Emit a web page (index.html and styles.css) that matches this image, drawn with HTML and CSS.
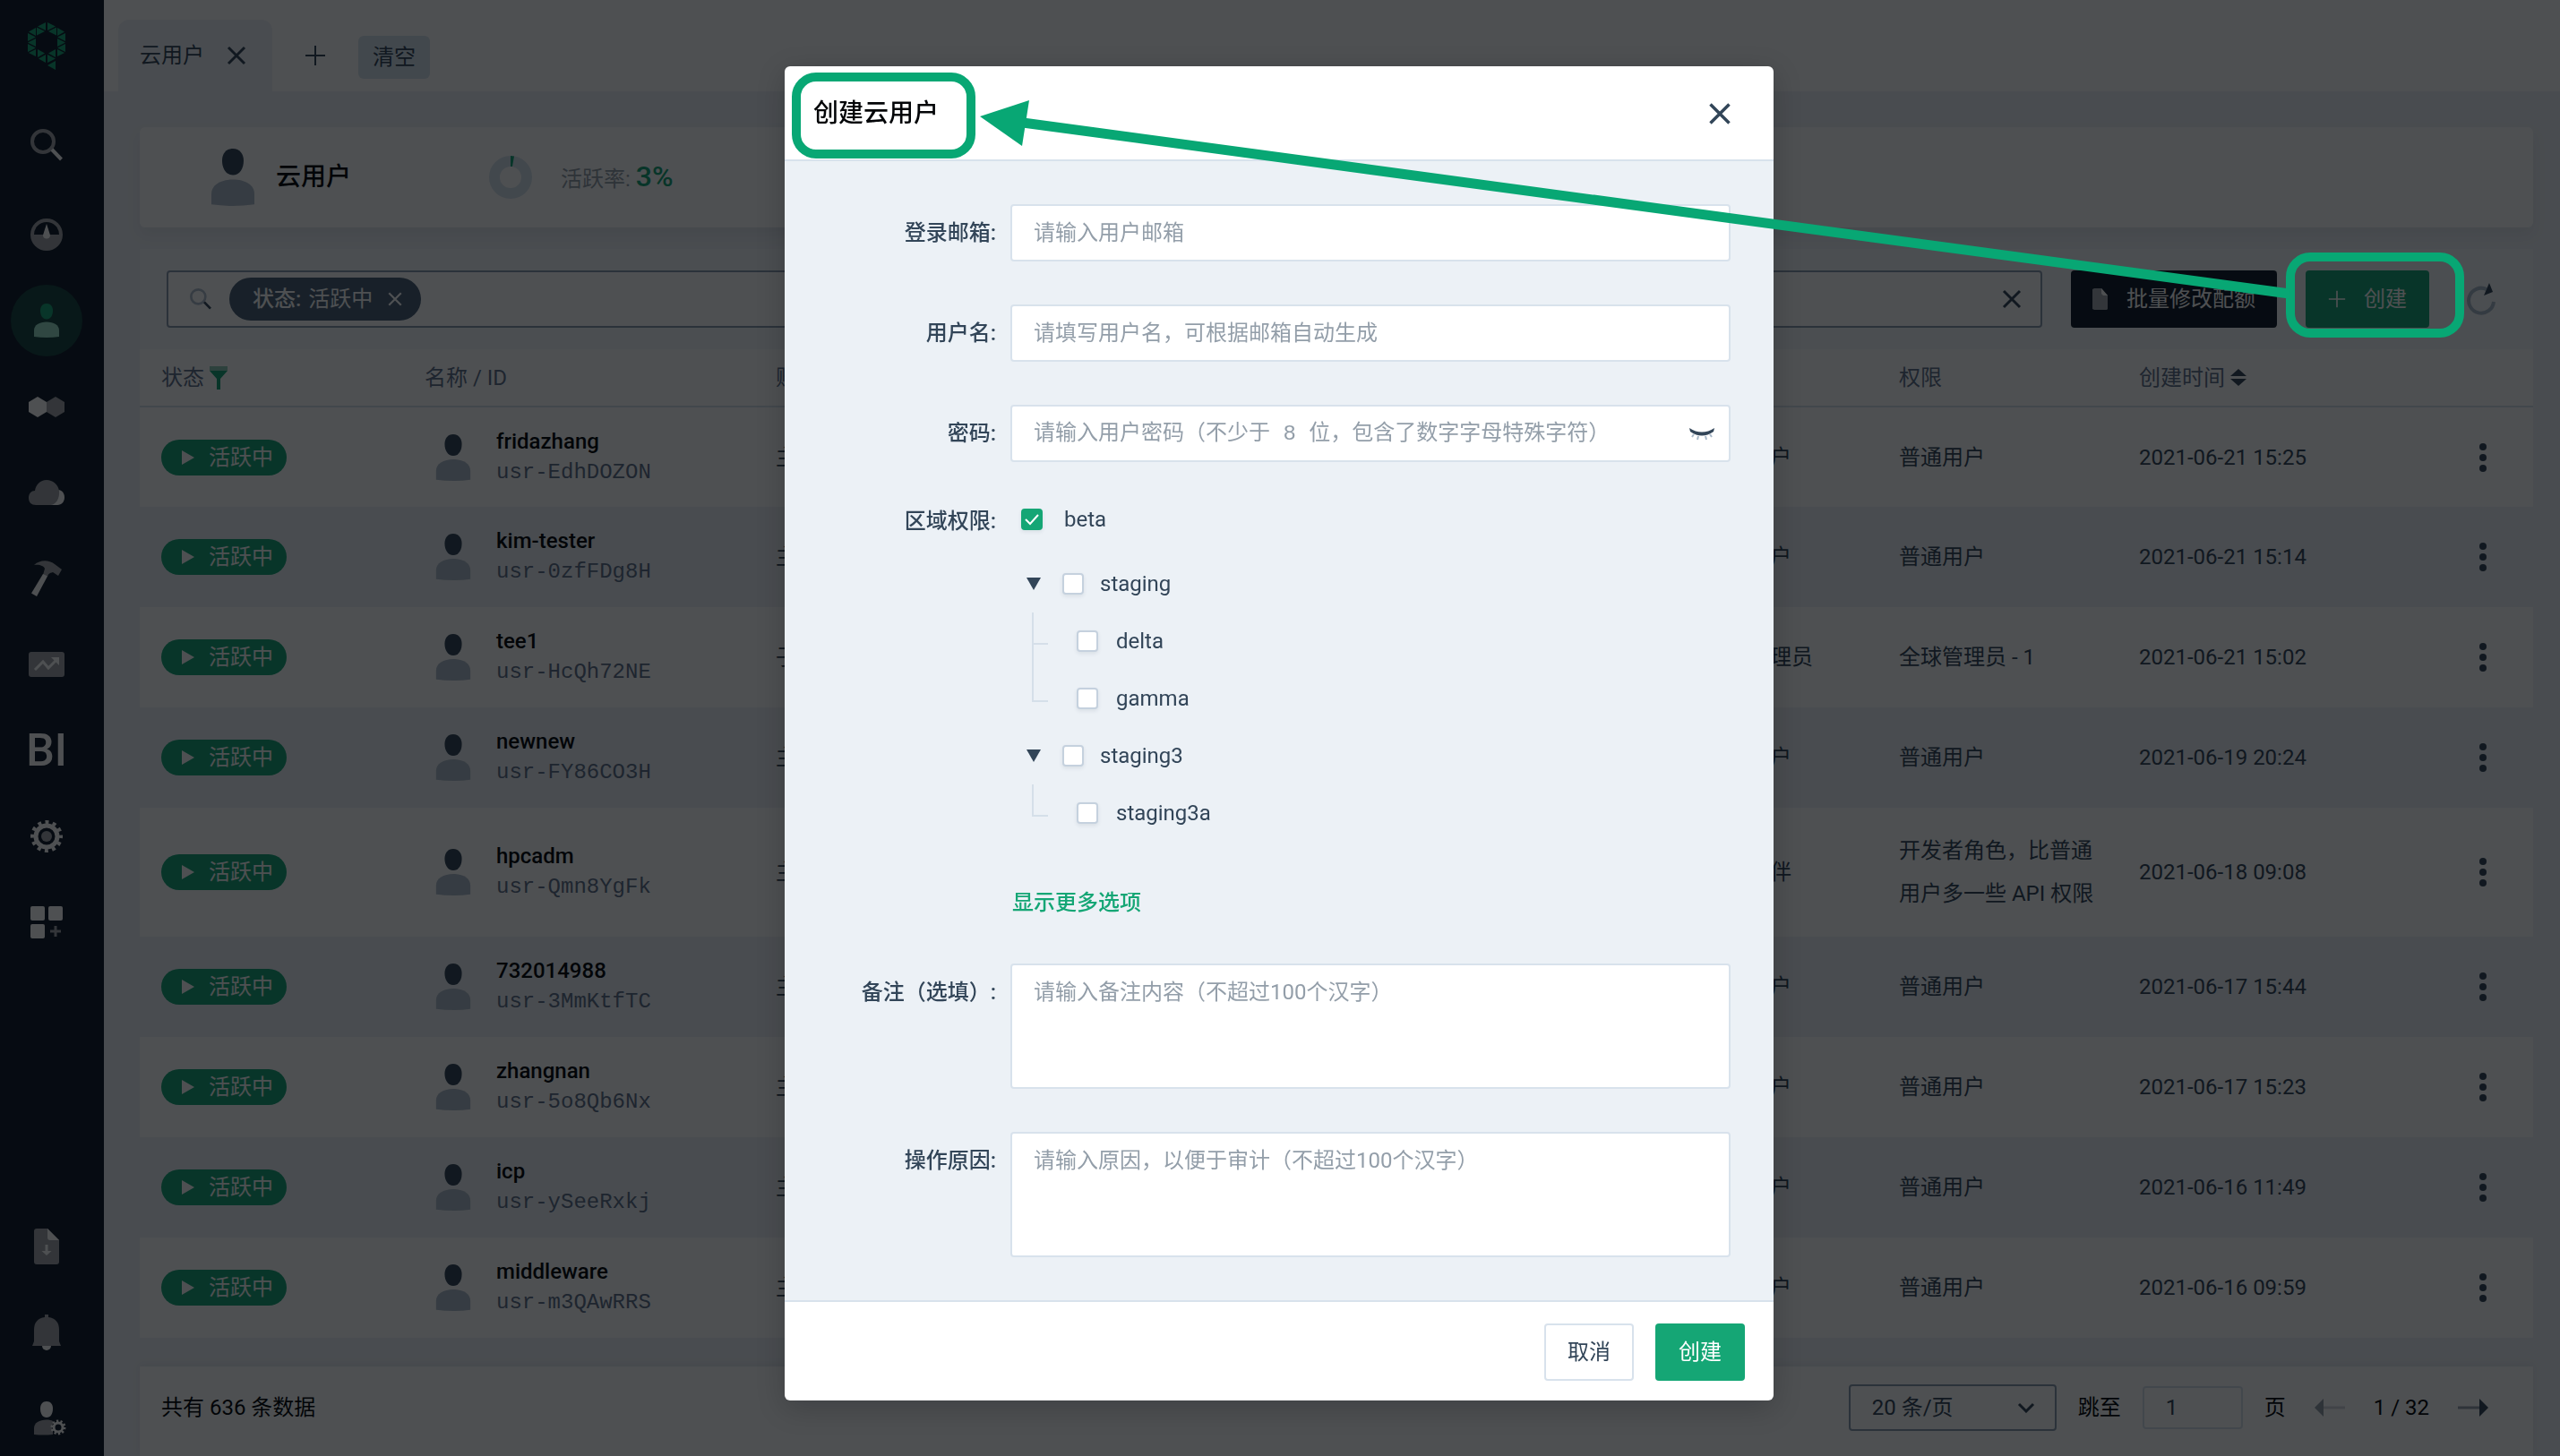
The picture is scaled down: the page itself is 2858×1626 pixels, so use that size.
FILE: index.html
```html
<!DOCTYPE html>
<html lang="zh-CN">
<head>
<meta charset="utf-8">
<title>云用户</title>
<link rel="stylesheet" href="styles.css">
</head>
<body>
<svg class="sprite" aria-hidden="true">
  <symbol id="i-user" viewBox="0 0 28 38"><path class="head" d="M14 0c4.500 0 7 3.500 7 8 0 5-2.500 9.500-7 9.500S7 13 7 8c0-4.500 2.500-8 7-8z"/><path class="torso" d="M0 37V30c0-6 6-9.500 14-9.500S28 24 28 30v7q-14 2-28 0z"/></symbol>
  <symbol id="i-x" viewBox="0 0 24 24"><path d="M3 3l18 18M21 3L3 21" fill="none" stroke="currentColor" stroke-width="3"/></symbol>
  <symbol id="i-plus" viewBox="0 0 24 24"><path d="M12 1v22M1 12h22" fill="none" stroke="currentColor" stroke-width="2"/></symbol>
  <symbol id="i-dots" viewBox="0 0 8 32"><circle cx="4" cy="4" r="4"/><circle cx="4" cy="16" r="4"/><circle cx="4" cy="28" r="4"/></symbol>
  <symbol id="i-play" viewBox="0 0 14 16"><path d="M0 0l14 8-14 8z"/></symbol>
  <symbol id="i-search" viewBox="0 0 36 36"><circle class="ring" cx="14" cy="14" r="12"/><path class="grip" d="M24 23l10.500 11"/></symbol>
</svg>

<div class="app">
  <nav class="sidebar" aria-label="主导航">
    <a class="logo" href="#" aria-label="首页"><svg width="42" height="54" viewBox="0 0 42 54"><path d="M20 1v9l-9-4.500zM22 1v9l9-4.500zM10 6.500v9l9-4.500zM32 6.500v9L23 11zM9 7v9l-8-4.500zM33 7v9l8-4.500zM0 13v9l9-4.500zM42 13v9l-9-4.500zM9 19v9l-9-4.500zM33 19v9l9-4.500zM0 25v9l9-4.500zM42 25v9l-9-4.500zM9 31v8l-8-4zM33 31v8l8-4zM11 31v9l8-4.500zM31 31v9l-8-4.500zM20 37v9l-8-4.500zM22 37v9l9-4.500zM31 44v10l-9-5z"/></svg></a>
    <a class="nav-item nav-search" href="#" aria-label="搜索"><svg width="36" height="36"><use href="#i-search"/></svg></a>
    <a class="nav-item" href="#" aria-label="概览"><svg width="36" height="36" viewBox="0 0 36 36"><path class="dim" fill-rule="evenodd" d="M18 0a18 18 0 1 1 0 36 18 18 0 0 1 0-36zM4 18h28a14 14 0 0 0-28 0z"/><path class="lit" d="M18 6l4 12.500a4 4 0 1 1-8 0z"/></svg></a>
    <a class="nav-item active" href="#" aria-label="云用户"><svg width="28" height="38"><use href="#i-user"/></svg></a>
    <a class="nav-item" href="#" aria-label="资源"><svg width="40" height="23" viewBox="0 0 40 23"><path class="lit" d="M10 0l10 6v11l-10 6-10-6V6z"/><path class="dim" d="M30 0l10 6v11l-10 6-10-6V6z"/></svg></a>
    <a class="nav-item" href="#" aria-label="云平台"><svg width="40" height="28" viewBox="0 0 40 28"><path class="lit" d="M33 11c4 0 7 4 7 8.500S37 28 32 28h-8z"/><path class="dim" d="M7 12C8 5 13 0 20 0s13 5 14 12c1 9-4 16-10 16H8c-5 0-8-3-8-8s3-8 7-8z"/></svg></a>
    <a class="nav-item" href="#" aria-label="工具"><svg width="36" height="40" viewBox="0 0 36 40"><path class="dim" d="M4 5C11-1 20-1 27 4l8 6-4 7-6-4c-4 1-5 2-6 5l-5-2 2-7C15 6 10 4 4 5z"/><path class="lit" d="M14 15l5 2.500L7 40l-6-3.500z"/></svg></a>
    <a class="nav-item" href="#" aria-label="监控"><svg width="40" height="28" viewBox="0 0 40 28"><rect class="dim" width="40" height="28" rx="3"/><path class="lit-line" d="M7 20l9-9 6 7 9-9" fill="none" stroke-width="3"/><path class="lit" d="M25 6h9v9z"/></svg></a>
    <a class="nav-item bi" href="#">BI</a>
    <a class="nav-item" href="#" aria-label="设置"><svg width="36" height="36" viewBox="0 0 36 36"><circle class="lit-line" cx="18" cy="18" r="16" fill="none" stroke-width="4" stroke-dasharray="4 4.377" stroke-dashoffset="2"/><circle class="lit-line" cx="18" cy="18" r="12" fill="none" stroke-width="5"/><circle class="dim" cx="18" cy="18" r="6"/></svg></a>
    <a class="nav-item" href="#" aria-label="应用"><svg width="36" height="36" viewBox="0 0 36 36"><rect class="lit" width="16" height="16" rx="2"/><rect class="lit" x="20" width="16" height="16" rx="2"/><rect class="lit" y="20" width="16" height="16" rx="2"/><path class="dim" d="M26.500 22h3v4.500H34v3h-4.500V34h-3v-4.500H22v-3h4.500z"/></svg></a>
    <div class="nav-bottom">
      <a class="nav-item" href="#" aria-label="下载"><svg width="28" height="40" viewBox="0 0 28 40"><path class="dim" d="M3 0h12l13 13v24q0 3-3 3H3q-3 0-3-3V3q0-3 3-3z"/><path class="lit" d="M15 0l13 13H18q-3 0-3-3z"/><path class="lit" d="M12.500 18h3v7h4l-5.500 5-5.500-5h4z"/></svg></a>
      <a class="nav-item" href="#" aria-label="通知"><svg width="32" height="40" viewBox="0 0 32 40"><path class="dim" d="M14 0h4v3c8 1 12 6 12 14v13l2 5H0l2-5V17C2 9 6 4 14 3z"/><path class="lit" d="M11 35h10a5 5 0 0 1-10 0z"/></svg></a>
      <a class="nav-item" href="#" aria-label="账户"><svg class="shifted" width="36" height="38" viewBox="0 0 36 38"><path class="lit" d="M14 0c4.500 0 7 3.500 7 8 0 6-2.500 10-7 10S7 14 7 8c0-4.500 2.500-8 7-8z"/><path class="dim" d="M0 37V30c0-6 6-9.500 14-9.500 3 0 5 .5 7 1.500v15q-10 1-21 0z"/><circle class="gear-gap" cx="27" cy="29" r="7"/><circle class="lit-line" cx="27" cy="29" r="7" fill="none" stroke-width="3" stroke-dasharray="2.200 2.200"/><circle class="lit-line" cx="27" cy="29" r="5" fill="none" stroke-width="3"/></svg></a>
    </div>
  </nav>

  <main class="main">
    <header class="tabs">
      <div class="tab"><span>云用户</span><button class="icon-btn" aria-label="关闭标签"><svg width="24" height="24"><use href="#i-x"/></svg></button></div>
      <button class="icon-btn add-tab" aria-label="新建标签"><svg width="24" height="24"><use href="#i-plus"/></svg></button>
      <button class="clear-tabs">清空</button>
    </header>

    <div class="content">
      <section class="summary">
        <svg class="avatar-lg" width="48" height="64" viewBox="0 0 28 38" preserveAspectRatio="none"><use href="#i-user" width="28" height="38"/></svg>
        <h1>云用户</h1>
        <svg class="donut" width="48" height="48" viewBox="0 0 48 48"><circle cx="24" cy="24" r="18" fill="none" stroke="#d8e4ee" stroke-width="12"/><path d="M24 0l4 .4-2 11.700-2-.1z" fill="#15a675"/></svg>
        <p class="rate">活跃率: <strong>3%</strong></p>
      </section>

      <section class="panel">
        <div class="toolbar">
          <div class="search">
            <svg class="search-icon" width="24" height="24" viewBox="0 0 36 36"><use href="#i-search" width="36" height="36"/></svg>
            <span class="tag"><b>状态:</b> 活跃中<button class="icon-btn" aria-label="移除条件"><svg width="18" height="18"><use href="#i-x"/></svg></button></span>
            <input type="text" aria-label="搜索云用户">
            <button class="icon-btn" aria-label="清除搜索"><svg width="24" height="24"><use href="#i-x"/></svg></button>
          </div>
          <button class="btn dark"><svg width="18" height="24" viewBox="0 0 18 24"><path fill="#a3a8ae" d="M2 0h8l7 8v15l-1 1H2l-2-1V1z"/><path fill="#fff" d="M10 0l7 8h-5l-2-2z"/></svg>批量修改配额</button>
          <button class="btn green"><svg width="20" height="20"><use href="#i-plus"/></svg>创建</button>
          <button class="icon-btn refresh" aria-label="刷新"><svg width="34" height="36" viewBox="0 0 34 36"><path fill="none" stroke="#a9b9c9" stroke-width="4" d="M22 7A14 14 0 1 0 30 21"/><path fill="#324558" d="M25 0l4 10-10 4z"/></svg></button>
        </div>

        <div class="table-wrap">
        <table>
          <colgroup><col class="c-status"><col class="c-name"><col><col class="c-role"><col class="c-perm"><col class="c-time"><col class="c-menu"></colgroup>
          <thead>
            <tr><th><span class="th-in">状态<svg width="20" height="26" viewBox="0 0 20 26"><path fill="#8fcdb7" d="M0 0h20v5H0z"/><path fill="#15a675" d="M0 5h20l-8 9v12H8V14z"/></svg></span></th><th>名称 / ID</th><th>账户类型</th><th>角色</th><th>权限</th><th><span class="th-in">创建时间<svg width="18" height="20" viewBox="0 0 18 20"><path fill="#324558" d="M0 8l9-8 9 8zM0 11h18l-9 8z"/></svg></span></th><th></th></tr>
          </thead>
          <tbody>
            <tr><td><span class="pill"><svg width="14" height="16"><use href="#i-play"/></svg>活跃中</span></td><td><div class="who"><svg width="40" height="52"><use href="#i-user"/></svg><div><div class="name">fridazhang</div><div class="uid">usr-EdhDOZON</div></div></div></td><td>主账户</td><td>普通用户</td><td>普通用户</td><td>2021-06-21 15:25</td><td><button class="icon-btn" aria-label="更多"><svg width="8" height="32"><use href="#i-dots"/></svg></button></td></tr>
            <tr><td><span class="pill"><svg width="14" height="16"><use href="#i-play"/></svg>活跃中</span></td><td><div class="who"><svg width="40" height="52"><use href="#i-user"/></svg><div><div class="name">kim-tester</div><div class="uid">usr-0zfFDg8H</div></div></div></td><td>主账户</td><td>普通用户</td><td>普通用户</td><td>2021-06-21 15:14</td><td><button class="icon-btn" aria-label="更多"><svg width="8" height="32"><use href="#i-dots"/></svg></button></td></tr>
            <tr><td><span class="pill"><svg width="14" height="16"><use href="#i-play"/></svg>活跃中</span></td><td><div class="who"><svg width="40" height="52"><use href="#i-user"/></svg><div><div class="name">tee1</div><div class="uid">usr-HcQh72NE</div></div></div></td><td>子账户</td><td>全球管理员</td><td>全球管理员 - 1</td><td>2021-06-21 15:02</td><td><button class="icon-btn" aria-label="更多"><svg width="8" height="32"><use href="#i-dots"/></svg></button></td></tr>
            <tr><td><span class="pill"><svg width="14" height="16"><use href="#i-play"/></svg>活跃中</span></td><td><div class="who"><svg width="40" height="52"><use href="#i-user"/></svg><div><div class="name">newnew</div><div class="uid">usr-FY86CO3H</div></div></div></td><td>主账户</td><td>普通用户</td><td>普通用户</td><td>2021-06-19 20:24</td><td><button class="icon-btn" aria-label="更多"><svg width="8" height="32"><use href="#i-dots"/></svg></button></td></tr>
            <tr><td><span class="pill"><svg width="14" height="16"><use href="#i-play"/></svg>活跃中</span></td><td><div class="who"><svg width="40" height="52"><use href="#i-user"/></svg><div><div class="name">hpcadm</div><div class="uid">usr-Qmn8YgFk</div></div></div></td><td>主账户</td><td>合作伙伴</td><td>开发者角色，比普通用户多一些 API 权限</td><td>2021-06-18 09:08</td><td><button class="icon-btn" aria-label="更多"><svg width="8" height="32"><use href="#i-dots"/></svg></button></td></tr>
            <tr><td><span class="pill"><svg width="14" height="16"><use href="#i-play"/></svg>活跃中</span></td><td><div class="who"><svg width="40" height="52"><use href="#i-user"/></svg><div><div class="name">732014988</div><div class="uid">usr-3MmKtfTC</div></div></div></td><td>主账户</td><td>普通用户</td><td>普通用户</td><td>2021-06-17 15:44</td><td><button class="icon-btn" aria-label="更多"><svg width="8" height="32"><use href="#i-dots"/></svg></button></td></tr>
            <tr><td><span class="pill"><svg width="14" height="16"><use href="#i-play"/></svg>活跃中</span></td><td><div class="who"><svg width="40" height="52"><use href="#i-user"/></svg><div><div class="name">zhangnan</div><div class="uid">usr-5o8Qb6Nx</div></div></div></td><td>主账户</td><td>普通用户</td><td>普通用户</td><td>2021-06-17 15:23</td><td><button class="icon-btn" aria-label="更多"><svg width="8" height="32"><use href="#i-dots"/></svg></button></td></tr>
            <tr><td><span class="pill"><svg width="14" height="16"><use href="#i-play"/></svg>活跃中</span></td><td><div class="who"><svg width="40" height="52"><use href="#i-user"/></svg><div><div class="name">icp</div><div class="uid">usr-ySeeRxkj</div></div></div></td><td>主账户</td><td>普通用户</td><td>普通用户</td><td>2021-06-16 11:49</td><td><button class="icon-btn" aria-label="更多"><svg width="8" height="32"><use href="#i-dots"/></svg></button></td></tr>
            <tr><td><span class="pill"><svg width="14" height="16"><use href="#i-play"/></svg>活跃中</span></td><td><div class="who"><svg width="40" height="52"><use href="#i-user"/></svg><div><div class="name">middleware</div><div class="uid">usr-m3QAwRRS</div></div></div></td><td>主账户</td><td>普通用户</td><td>普通用户</td><td>2021-06-16 09:59</td><td><button class="icon-btn" aria-label="更多"><svg width="8" height="32"><use href="#i-dots"/></svg></button></td></tr>
          </tbody>
        </table>
        </div>

        <footer class="pager">
          <span>共有 636 条数据</span>
          <div class="pager-nav">
            <select aria-label="每页条数"><option>20 条/页</option></select>
            <label for="page">跳至</label>
            <input id="page" type="text" value="1">
            <span>页</span>
            <button class="icon-btn prev" aria-label="上一页"><svg width="34" height="20" viewBox="0 0 34 20"><path d="M8 8.500h26v3H8z" opacity=".4"/><path d="M0 10L10 0v20z"/></svg></button>
            <span class="count">1 / 32</span>
            <button class="icon-btn next" aria-label="下一页"><svg width="34" height="20" viewBox="0 0 34 20"><path d="M0 8.500h26v3H0z" opacity=".5"/><path d="M34 10L24 0v20z"/></svg></button>
          </div>
        </footer>
      </section>
    </div>
  </main>
</div>

<div class="overlay">
  <form class="modal" role="dialog" aria-labelledby="modal-title">
    <header class="modal-head">
      <h2 id="modal-title">创建云用户</h2>
      <button type="button" class="icon-btn" aria-label="关闭"><svg width="28" height="28"><use href="#i-x"/></svg></button>
    </header>
    <div class="modal-body">
      <div class="field"><label for="email">登录邮箱:</label><input id="email" type="text" placeholder="请输入用户邮箱"></div>
      <div class="field"><label for="uname">用户名:</label><input id="uname" type="text" placeholder="请填写用户名，可根据邮箱自动生成"></div>
      <div class="field"><label for="pwd">密码:</label>
        <div class="pwd"><input id="pwd" type="password" placeholder="请输入用户密码（不少于 8 位，包含了数字字母特殊字符）"><button type="button" class="icon-btn" aria-label="显示密码"><svg width="28" height="14" viewBox="0 0 28 14"><path fill="#324558" d="M0 0q14 9 28 0l-1 4q-13 9-26 0z"/><path fill="none" stroke="#a9b9c9" stroke-width="2" d="M5 7l-2 3M10 9l-1 4M18 9l1 4M23 7l2 3"/></svg></button></div>
      </div>
      <div class="field region"><span class="label">区域权限:</span>
        <div>
          <label class="check"><input type="checkbox" checked>beta</label>
          <ul class="tree">
            <li><div class="node"><svg width="16" height="14" viewBox="0 0 16 14"><path d="M0 0h16l-8 14z"/></svg><label class="check"><input type="checkbox">staging</label></div>
              <ul><li><label class="check"><input type="checkbox">delta</label></li><li><label class="check"><input type="checkbox">gamma</label></li></ul></li>
            <li><div class="node"><svg width="16" height="14" viewBox="0 0 16 14"><path d="M0 0h16l-8 14z"/></svg><label class="check"><input type="checkbox">staging3</label></div>
              <ul><li><label class="check"><input type="checkbox">staging3a</label></li></ul></li>
          </ul>
          <a class="more" href="#">显示更多选项</a>
        </div>
      </div>
      <div class="field"><label for="note">备注（选填）:</label><textarea id="note" placeholder="请输入备注内容（不超过100个汉字）"></textarea></div>
      <div class="field"><label for="reason">操作原因:</label><textarea id="reason" placeholder="请输入原因，以便于审计（不超过100个汉字）"></textarea></div>
    </div>
    <footer class="modal-foot"><button type="button" class="btn cancel">取消</button><button type="button" class="btn green">创建</button></footer>
  </form>
</div>

<svg class="callout" viewBox="0 0 2858 1626" aria-hidden="true">
  <g fill="none" stroke="#08a774" stroke-width="10"><rect x="889" y="86" width="195" height="86" rx="22"/><rect x="2557" y="287" width="189" height="85" rx="22"/><path stroke-width="11" d="M1142 137L2556 328"/></g>
  <path fill="#08a774" d="M1094 130l55-18-8 51z"/>
</svg>
</body>
</html>
```
FILE: styles.css
```css
* { box-sizing: border-box; }
body {
  margin: 0;
  font: 24px/32px Roboto, "Noto Sans CJK SC", sans-serif;
  color: #324558;
  background: #eff2f7;
}
button, input, select, textarea { font: inherit; color: inherit; }
h1, h2, p, ul { margin: 0; padding: 0; }
h1, h2 { font-weight: 500; }
ul { list-style: none; }
svg { display: block; flex: none; fill: currentColor; }
.sprite { position: absolute; width: 0; height: 0; }
.head { fill: var(--head, #324558); }
.torso { fill: var(--torso, #b0bdcb); }
.ring { fill: none; stroke: var(--ring, #a3a5aa); stroke-width: 4; }
.grip { fill: none; stroke: var(--grip, #fff); stroke-width: 4; }
.icon-btn { padding: 0; border: 0; background: none; display: inline-flex; }

.app { display: flex; height: 100vh; overflow: hidden; }

/* Sidebar */
.sidebar {
  width: 116px;
  flex: none;
  padding: 24px 12px 0;
  background: #0f1a28;
  display: flex;
  flex-direction: column;
}
.logo { width: 80px; height: 90px; display: flex; justify-content: center; color: #15a675; }
.nav-item {
  width: 80px;
  height: 80px;
  margin: 8px 0;
  flex: none;
  display: flex;
  align-items: center;
  justify-content: center;
  border-radius: 50%;
  color: #fff;
  text-decoration: none;
}
.nav-search { margin-bottom: 12px; }
.nav-item.active { background: #154540; --head: #15a675; --torso: #99e0c9; }
.bi { font-size: 50px; font-weight: 500; }
.dim { fill: #a3a5aa; }
.lit { fill: #fff; }
.lit-line { stroke: #fff; }
.gear-gap { fill: #0f1a28; }
.nav-bottom { margin-top: auto; display: flex; flex-direction: column; }
.nav-bottom .nav-item:last-child { margin-bottom: 2px; }
.shifted { margin-left: 8px; }

/* Tabs */
.main { flex: 1; min-width: 0; display: flex; flex-direction: column; }
.tabs { height: 102px; flex: none; padding: 22px 16px 0; display: flex; background: #fff; }
.tab {
  width: 172px;
  padding: 0 28px 0 24px;
  display: flex;
  align-items: center;
  justify-content: space-between;
  border-radius: 12px 12px 0 0;
  background: #eff2f7;
}
.add-tab { margin: 0 36px; align-items: center; }
.clear-tabs { width: 80px; height: 48px; margin-top: 18px; padding: 0; border: 0; border-radius: 6px; background: #d8e4ee; }

/* Content */
.content { flex: 1; min-height: 0; padding: 40px 30px 0 40px; display: flex; flex-direction: column; gap: 24px; }
.summary {
  height: 112px;
  flex: none;
  padding: 0 80px;
  display: flex;
  align-items: center;
  border-radius: 6px;
  background: #fff;
  box-shadow: 0 8px 16px rgba(50, 69, 88, .08);
}
.summary h1 { margin-left: 24px; font-size: 28px; color: #030508; }
.donut { margin-left: 154px; }
.rate { margin-left: 32px; color: #939ea9; }
.rate strong { font-size: 32px; font-weight: 500; color: #15a675; }

.panel { flex: 1; min-height: 0; display: flex; flex-direction: column; background: #f5f7fa; }
.toolbar { height: 112px; flex: none; padding: 0 40px 0 30px; display: flex; align-items: center; }
.search {
  flex: 1;
  height: 64px;
  margin-right: 32px;
  padding: 0 20px 0 24px;
  display: flex;
  align-items: center;
  border: 2px solid #8b9cb0;
  border-radius: 4px;
  background: #fff;
  --ring: #b0bdcb;
  --grip: #324558;
}
.search input { flex: 1; min-width: 0; border: 0; background: none; outline: 0; }
.tag {
  height: 48px;
  margin-left: 20px;
  padding: 0 20px 0 26px;
  display: flex;
  align-items: center;
  gap: 8px;
  border-radius: 24px;
  background: #4a5f76;
  color: #fff;
}
.tag b { font-weight: 500; }
.tag .icon-btn { margin-left: 8px; }
.btn {
  height: 64px;
  padding: 0 24px;
  display: inline-flex;
  align-items: center;
  justify-content: center;
  gap: 20px;
  border: 0;
  border-radius: 4px;
  color: #fff;
}
.btn.dark { width: 230px; background: #0f1a28; }
.toolbar .green { width: 138px; margin: 0 42px 0 32px; }
.btn.green { background: #15a675; }

/* Table */
.table-wrap { flex: 1; min-height: 0; background: #eff2f7; }
table { width: 100%; table-layout: fixed; border-collapse: collapse; background: #fff; }
.c-status { width: 294px; }
.c-name { width: 392px; }
.c-role { width: 216px; }
.c-perm { width: 268px; }
.c-time { width: 264px; }
.c-menu { width: 200px; }
th, td { padding: 0 24px; text-align: left; }
th { height: 64px; border-bottom: 2px solid #d8e2ec; font-weight: 400; color: #5f708a; }
td { height: 112px; line-height: 48px; }
td:nth-child(5) { padding-block: 24px; }
tbody tr:nth-child(even) { background: #eff2f7; }
td:last-child { padding-right: 52px; text-align: right; line-height: 0; }
td:last-child .icon-btn { vertical-align: middle; }
.th-in { display: inline-flex; align-items: center; gap: 6px; }
.pill {
  width: 140px;
  height: 40px;
  padding-left: 23px;
  display: flex;
  align-items: center;
  gap: 16px;
  border-radius: 20px;
  background: #15a675;
  color: #fff;
}
.who { display: flex; align-items: center; gap: 28px; padding-left: 12px; line-height: 34px; }
.name { font-weight: 500; color: #030508; }
.uid { line-height: 36px; font-family: "Liberation Mono", monospace; color: #5f708a; }

/* Pager */
.pager {
  height: 100px;
  padding: 0 50px 8px 24px;
  flex: none;
  display: flex;
  align-items: center;
  justify-content: space-between;
  background: #fff;
  color: #030508;
  box-shadow: 0 -2px 8px rgba(50, 69, 88, .08);
}
.pager-nav { display: flex; align-items: center; gap: 24px; }
.pager select {
  width: 232px;
  height: 52px;
  padding: 0 24px;
  appearance: none;
  border: 2px solid #8b9cb0;
  border-radius: 4px;
  color: #324558;
  background: #fff url("data:image/svg+xml,%3Csvg xmlns='http://www.w3.org/2000/svg' width='20' height='12'%3E%3Cpath d='M2 2l8 8 8-8' fill='none' stroke='%23324558' stroke-width='3'/%3E%3C/svg%3E") no-repeat right 22px center;
}
.pager input { width: 112px; height: 48px; padding: 0 24px; border: 2px solid #d8e2ec; border-radius: 4px; background: #fff; color: #324558; }
.prev { margin-left: 8px; color: #939ea9; }
.count { margin: 0 8px; }
.next { color: #324558; }

/* Dialog */
.overlay {
  position: fixed;
  inset: 0;
  padding: 74px 2px 0 0;
  display: flex;
  align-items: flex-start;
  justify-content: center;
  background: rgba(3, 5, 8, .7);
}
.modal { width: 1104px; border-radius: 6px; overflow: hidden; background: #fff; box-shadow: 0 8px 32px rgba(3, 5, 8, .2); }
.modal-head {
  height: 106px;
  padding: 2px 46px 0 32px;
  display: flex;
  align-items: center;
  justify-content: space-between;
  border-bottom: 2px solid #d8e2ec;
}
.modal-head h2 { font-size: 28px; color: #030508; }
.modal-body { padding: 48px; display: flex; flex-direction: column; gap: 48px; background: #ecf1f6; }
.field { display: grid; grid-template-columns: 188px 1fr; gap: 16px; }
.field > label, .label { padding: 16px 0; text-align: right; font-weight: 500; white-space: nowrap; }
.modal input[type="text"], .modal input[type="password"], textarea {
  display: block;
  width: 100%;
  height: 64px;
  padding: 0 24px;
  border: 2px solid #d8e2ec;
  border-radius: 4px;
  background: #fff;
}
.modal textarea { height: 140px; padding: 14px 24px; resize: none; }
.modal input[type="password"] { font-family: "Liberation Mono", "Noto Sans CJK SC", monospace; }
::placeholder { color: #939ea9; opacity: 1; }
.pwd { position: relative; }
.pwd .icon-btn { position: absolute; right: 18px; top: 26px; }
.field > .label { padding: 2px 0 0; }
.check { display: flex; align-items: center; gap: 18px; }
.region > div > .check { padding-left: 12px; gap: 24px; height: 32px; }
.check input {
  appearance: none;
  width: 24px;
  height: 24px;
  margin: 0;
  border: 2px solid #c5d1de;
  border-radius: 4px;
  background: #fff;
  box-shadow: 0 2px 4px rgba(50, 69, 88, .1);
}
.check input:checked {
  border-color: #15a675;
  background: #15a675 url("data:image/svg+xml,%3Csvg xmlns='http://www.w3.org/2000/svg' width='20' height='20'%3E%3Cpath d='M3 10l5 5 9-10' fill='none' stroke='%23fff' stroke-width='2'/%3E%3C/svg%3E") no-repeat center;
}
.tree { margin: 24px 0 0 18px; }
.node { height: 64px; display: flex; align-items: center; gap: 24px; }
.tree ul { padding-left: 6px; }
.tree ul li { position: relative; height: 64px; padding-left: 50px; display: flex; align-items: center; }
.tree ul .check { gap: 20px; }
.tree ul li::before {
  content: "";
  position: absolute;
  left: 0;
  top: -32px;
  width: 16px;
  height: 66px;
  border: solid #d5dfe9;
  border-width: 0 0 2px 2px;
}
.tree ul li:first-child::before { top: 0; height: 34px; }
.more { display: block; width: max-content; margin: 52px 0 4px 2px; color: #15a675; font-weight: 500; text-decoration: none; }
.modal-foot {
  height: 112px;
  padding: 2px 32px 0;
  display: flex;
  align-items: center;
  justify-content: flex-end;
  gap: 24px;
  border-top: 2px solid #d8e2ec;
}
.modal-foot .btn { width: 100px; }
.btn.cancel { border: 2px solid #d8e2ec; background: #fff; color: #324558; }

.callout { position: absolute; top: 0; left: 0; width: 100%; pointer-events: none; }
```
